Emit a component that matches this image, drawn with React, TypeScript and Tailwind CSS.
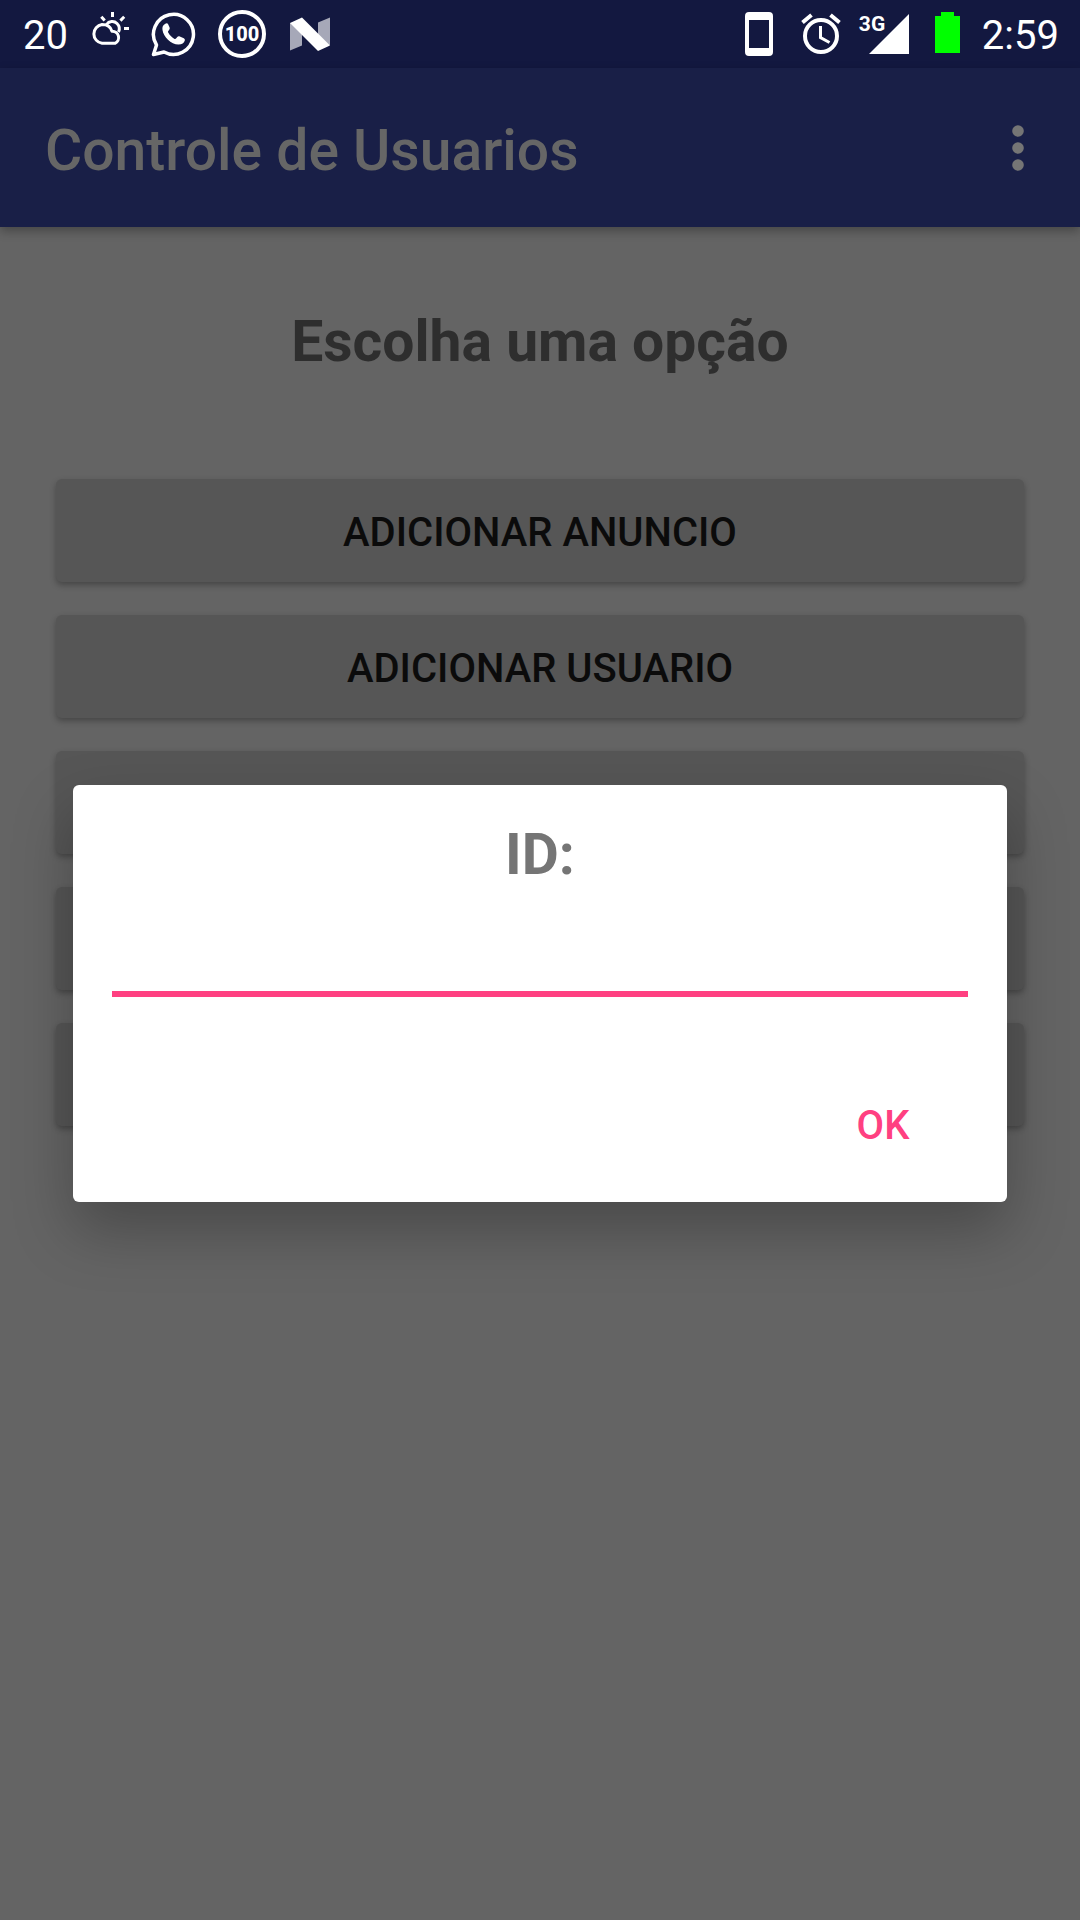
import React from "react";

const options = ["ADICIONAR ANUNCIO", "ADICIONAR USUARIO", "", "", ""];

function StatusBar() {
  return (
    <div className="flex h-[68px] items-center justify-between bg-[#131840] pr-[21px] pl-[23px] text-[40px] leading-none text-white">
      <div className="flex items-center">
        <span className="pt-1">20</span>
        <svg className="ml-6" width="40" height="68" viewBox="92 0 40 68" fill="none" stroke="#fff" strokeWidth="3">
          <path d="M102 43.300 A9.500 9.500 0 0 1 102 24.500 C107.500 24.500 111 27.500 112 31.300 A6.300 6.300 0 0 1 115 43.300 Z" strokeLinejoin="round" />
          <path d="M106.500 24.500 C109 21 114 20.500 117 23.500 C119.500 26 120 29 118.500 32" />
          <path d="M112.500 12v5M101.300 16.800l3.400 3.800M124.200 16.800l-3.800 3.800M124 28.500h5" />
        </svg>
        <svg className="ml-[18px]" width="48" height="68" viewBox="151 0 48 68">
          <path fill="none" stroke="#fff" strokeWidth="3.500" strokeLinejoin="round" d="M154.500 54.500 L157.500 45 A20 20 0 1 1 165 52 Z" />
          <path fill="#fff" d="M166 24c-2 1-3 3-2.500 6 .8 6.500 8.500 14.500 16 14.500 3.500 0 5.500-1.500 6.300-4 .3-1-.2-1.800-1-2.300l-4-1.700c-1-.5-2-.2-2.500.5l-1.300 1.500c-.5.6-1 .6-1.800.2-2.500-1.400-4.500-3.500-6-6.200-.4-.7-.2-1.200.3-1.700l1-1.600c.4-.6.3-1.200 0-2l-1.500-3.200c-.5-1-1.800-1-3 0z" />
        </svg>
        <span className="ml-5 flex size-12 items-center justify-center rounded-full border-4 border-white text-[20px] font-extrabold">100</span>
        <svg className="ml-6" width="40" height="68" viewBox="291 0 40 68">
          <path fill="#a6a8b8" d="M291 23v27.500l12-5V23zM331 17.500l-12 5V45h12z" />
          <path fill="#fff" d="M291 23l12-5.500 28 28-12 5.500z" />
        </svg>
      </div>
      <div className="flex items-center">
        <svg width="28" height="68" viewBox="745 0 28 68">
          <path fill="#fff" fillRule="evenodd" d="M749 12h20a4 4 0 0 1 4 4v36a4 4 0 0 1-4 4h-20a4 4 0 0 1-4-4V16a4 4 0 0 1 4-4zM749 20v28h20V20z" />
        </svg>
        <svg className="ml-7" width="40" height="68" viewBox="801 0 40 68" fill="none" stroke="#fff">
          <circle cx="821" cy="36" r="16" strokeWidth="4" />
          <path strokeWidth="4" d="M802.500 22.500l9-7.500M839.500 22.500l-9-7.500" />
          <path strokeWidth="3" d="M820.500 26v11.500l9 5" />
        </svg>
        <span className="relative ml-5 block h-[68px] w-12">
          <svg width="48" height="68" viewBox="861 0 48 68">
            <path fill="#fff" d="M869 54L909 14V54z" />
          </svg>
          <span className="absolute top-3.5 -left-0.5 text-[21px] font-bold">3G</span>
        </span>
        <svg className="ml-[26px]" width="25" height="68" viewBox="935 0 25 68">
          <path fill="#0f0" d="M935 16h6v-4h13v4h6v37h-25z" />
        </svg>
        <span className="ml-[22px] pt-1">2:59</span>
      </div>
    </div>
  );
}

export default function App() {
  return (
    <div className="relative min-h-screen bg-[#646464] font-[Roboto,sans-serif]">
      <StatusBar />
      <header className="flex h-[159px] items-center justify-between bg-[#191f47] pr-9 pl-[45px] shadow-[0_4px_10px_rgba(0,0,0,0.3)]">
        <h1 className="pt-1.5 text-[57px] leading-[68px] font-medium text-[#666]">Controle de Usuarios</h1>
        <button aria-label="Mais opções" className="flex h-20 w-[52px] items-center justify-center">
          <svg width="12" height="46" viewBox="0 0 12 46" fill="#757575">
            <circle cx="6" cy="6" r="5.800" />
            <circle cx="6" cy="23" r="5.800" />
            <circle cx="6" cy="40" r="5.800" />
          </svg>
        </button>
      </header>
      <main className="px-14 pt-[81px]">
        <h2 className="text-center text-[57px] leading-[68px] font-bold text-[#2e2e2e]">Escolha uma opção</h2>
        <div className="mt-[103px] flex flex-col gap-[33px]">
          {options.map((label, i) => (
            <button
              key={i}
              aria-label={label || `Opção ${i + 1}`}
              className="h-[103px] w-full rounded-md bg-[#565656] pt-1 text-[40px] leading-none font-medium text-[#0b0b0b] shadow-[0_3px_6px_rgba(0,0,0,0.3)]"
            >
              {label}
            </button>
          ))}
        </div>
      </main>
      <div className="absolute inset-0 flex items-center px-[73px] pt-[67px]">
        <form
          role="dialog"
          aria-labelledby="id-label"
          onSubmit={(e) => e.preventDefault()}
          className="flex w-full flex-col rounded-md bg-white px-[39px] pt-9 pb-[25px] shadow-[0_28px_60px_rgba(0,0,0,0.27)]"
        >
          <label id="id-label" htmlFor="id-field" className="text-center text-[57px] leading-[68px] font-bold text-[#757575]">
            ID:
          </label>
          <input id="id-field" type="text" className="h-[108px] w-full border-b-6 border-[#ff4081] text-[50px] outline-none" />
          <button type="submit" className="mt-[77px] h-[103px] w-[170px] self-end text-[40px] leading-none font-medium text-[#ff4081]">
            OK
          </button>
        </form>
      </div>
    </div>
  );
}
